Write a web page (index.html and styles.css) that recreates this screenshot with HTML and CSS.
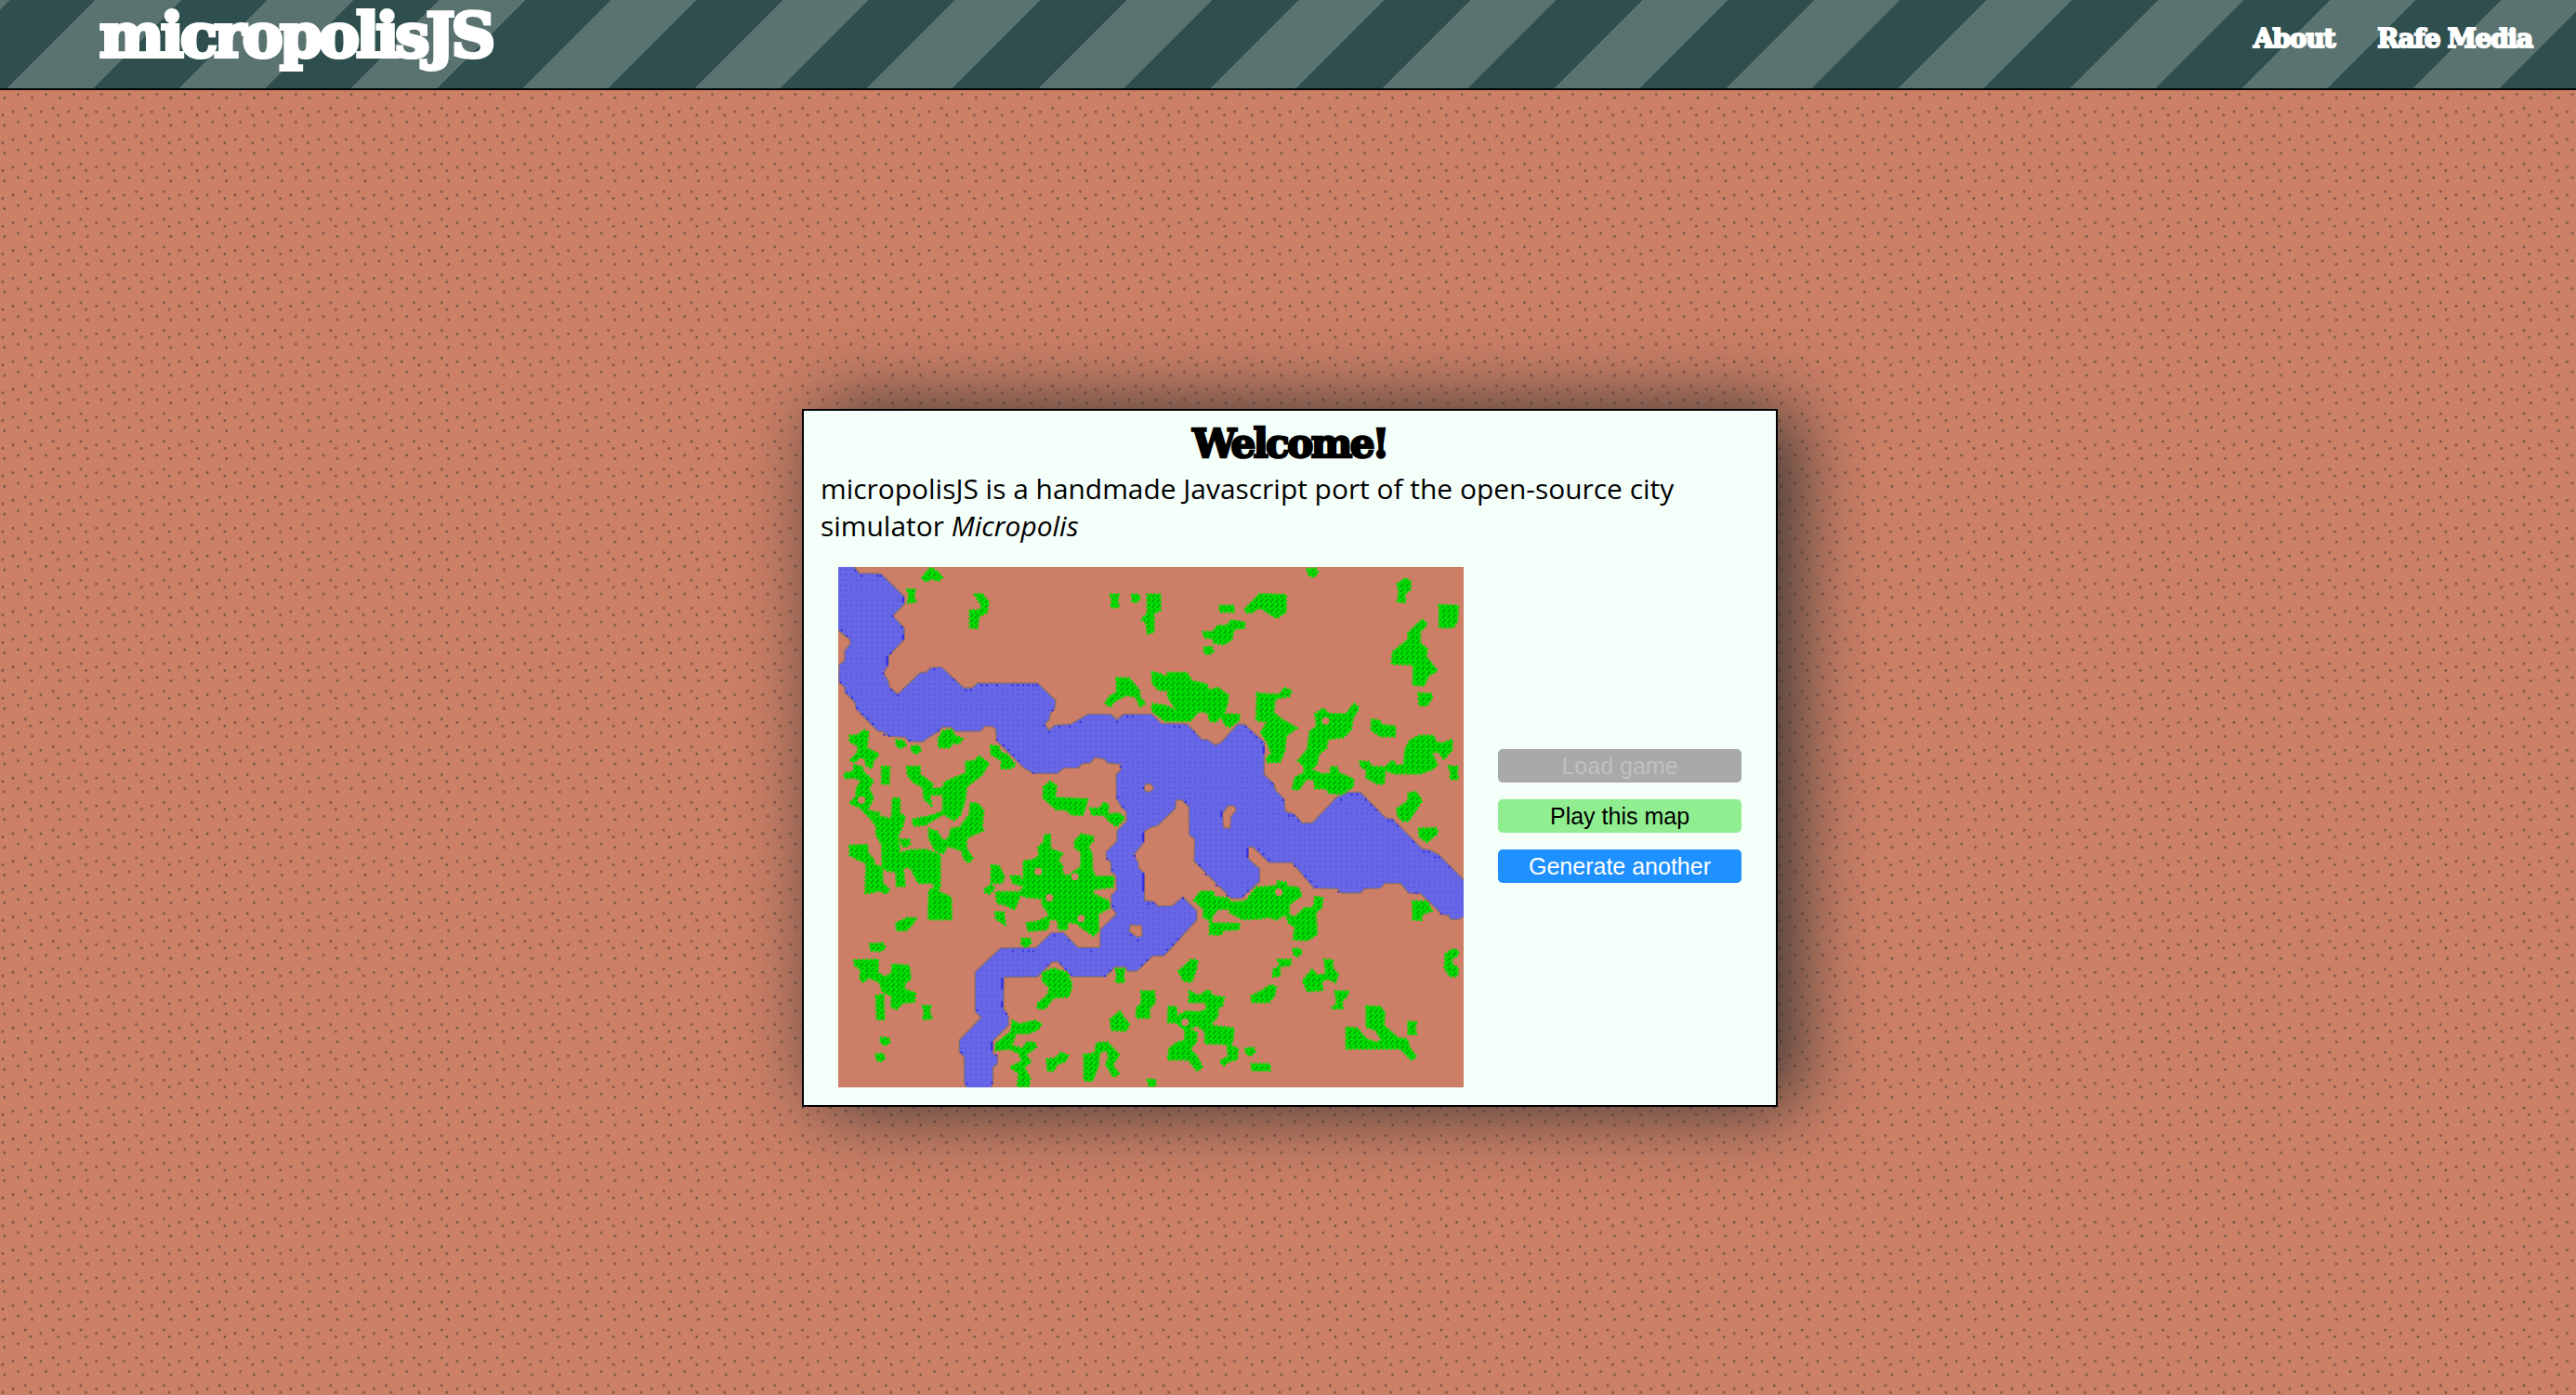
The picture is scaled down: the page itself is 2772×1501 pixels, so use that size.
FILE: index.html
```html
<!DOCTYPE html>
<html lang="en">
<head>
<meta charset="utf-8">
<title>micropolisJS</title>
<link rel="stylesheet" href="styles.css">
</head>
<body>
<header class="banner">
  <h1 class="logo">micropolisJS</h1>
  <nav class="links"><a class="about">About</a><a class="media">Rafe Media</a></nav>
</header>
<main class="stage">
  <section class="dialog">
    <h2 class="title">Welcome!</h2>
    <p class="intro">micropolisJS is a handmade Javascript port of the open-source city simulator <em>Micropolis</em></p>
    <div class="chooser">
      <svg class="map" viewBox="7 15 2016 1680" preserveAspectRatio="none">
        <defs>
          <pattern id="wood" x="7" y="15" width="16.8" height="16.8" patternUnits="userSpaceOnUse">
            <rect width="16.8" height="16.8" fill="#00e400"/>
            <path d="M4 12.5L8 9M10 5L13 2.500" stroke="#007d08" stroke-width="4.500" stroke-linecap="round" opacity=".8"/>
          </pattern>
          <pattern id="sea" x="7" y="15" width="16.8" height="16.8" patternUnits="userSpaceOnUse">
            <rect width="16.8" height="16.8" fill="#6666e6"/>
            <circle cx="8.400" cy="8.400" r="3" fill="#5555dd"/>
          </pattern>
        </defs>
        <rect x="7" y="15" width="2016" height="1680" fill="#cc7f66"/>
        <path class="water" d="M-10,5 58,5 58,15 75,35 145,37 220,110 220,135 184,173 220,212 220,250 170,302 168,335 152,358 168,380 172,402 199,425 270,357 292,354 304,340 340,338 412,405 440,405 456,390 650,390 708,446 706,470 690,490 688,508 674,522 686,542 704,526 758,522 812,490 885,490 906,508 926,490 1018,490 1048,520 1132,522 1180,572 1196,572 1224,590 1242,580 1295,522 1318,524 1380,580 1380,685 1412,715 1416,735 1446,765 1448,803 1476,812 1504,842 1536,840 1612,760 1650,742 1690,742 1772,825 1794,828 1820,855 1890,925 1912,928 1944,944 2033,1035 2033,1140 2005,1153 1980,1152 1975,1140 1955,1138 1885,1070 1845,1068 1820,1037 1770,1036 1755,1052 1705,1054 1690,1068 1628,1068 1618,1054 1540,1052 1470,970 1395,970 1345,920 1328,920 1328,955 1366,990 1366,1030 1306,1085 1274,1085 1154,965 1156,895 1138,880 1137,790 1115,768 1096,768 1094,795 1037,850 1018,855 992,870 992,905 960,945 975,970 975,985 993,1005 995,1092 1020,1094 1040,1110 1085,1108 1118,1080 1163,1125 1163,1155 1058,1270 1020,1272 970,1320 940,1320 932,1306 900,1306 868,1338 760,1338 715,1290 697,1290 650,1338 542,1340 540,1440 556,1465 556,1495 506,1545 506,1585 522,1600 520,1620 506,1630 506,1680 497,1705 425,1705 413,1682 413,1598 397,1582 397,1543 467,1470 448,1450 448,1322 530,1245 645,1243 695,1195 733,1195 780,1243 850,1243 852,1185 904,1135 887,1115 887,1075 904,1058 902,1010 887,1000 885,970 870,950 870,935 905,900 905,868 937,835 935,805 920,790 903,762 903,685 918,670 918,652 875,648 865,636 835,630 820,648 795,650 780,664 735,664 715,682 638,682 605,664 517,575 515,540 505,530 480,530 465,546 385,546 370,532 345,532 325,550 300,565 280,580 235,578 222,565 170,562 150,547 135,546 65,475 60,452 28,420 28,405 8,385 10,330 27,318 28,285 46,262 44,250 -10,205Z M992,728 1000,716 1014,716 1024,728 1014,740 998,740Z M1265,785 1285,788 1290,800 1273,820 1270,858 1250,858 1246,812Z M950,1170 985,1173 987,1205 970,1210 945,1190Z"/>
        <path class="shore" d="M62,27h0M82,44h0M132,44h0M143,44h0M216,115v12M182,175h0M212,210h0M216,235v12M177,293h0M165,305v26M152,359h0M178,412h0M199,430h0M317,347h0M380,380h0M418,413h0M435,413h0M469,397h0M486,397h0M519,397h0M569,397h0M586,397h0M603,397h0M620,397h0M636,397h0M648,397h0M698,478h0M670,526h0M686,548h0M720,531h0M754,531h0M788,515h0M906,515h0M939,498h0M956,498h0M18,220h0M35,237h0M15,388h0M35,421h0M52,437h0M68,471h0M85,490h0M102,506h0M118,522h0M155,557h0M170,560h0M238,575h0M330,543h0M519,573h0M540,591h0M556,606h0M573,622h0M590,640h0M636,680h0M917,660h0M908,758h0M925,790h0M990,728h0M1090,531h0M1107,531h0M1154,548h0M1320,531h0M1338,548h0M1355,565h0M1371,582h0M1378,595v20M1405,715h0M1440,768h0M1460,818h0M1473,818h0M1490,834h0M1628,767h0M1662,750h0M1679,750h0M1708,767h0M1725,784h0M1741,800h0M1780,834h0M1793,834h0M1810,851h0M1127,774h0M1242,805v15M1860,902h0M1895,935h0M1910,935h0M1930,952h0M1943,952h0M1977,985h0M1950,1134h0M1870,1068h0M1620,1064h0M1548,1048h0M1530,1030h0M1513,1013h0M1479,980h0M1396,960h0M1378,942h0M1363,926h0M1326,925v26M1172,977h0M1192,1008h0M1226,1043h0M1262,1076h0M1312,1076h0M1328,1060h0M990,875v25M963,948h0M990,1005v55M1007,1103h0M1024,1100h0M1118,1085h0M1102,1217h0M1085,1234h0M1068,1250h0M1002,1284h0M985,1300h0M866,1335h0M884,1318h0M758,1330h0M740,1314h0M725,1295h0M682,1300h0M704,1205h0M750,1221h0M822,1255h0M570,1255h0M603,1255h0M620,1255h0M637,1255h0M893,1110h0M890,992h0M873,958h0M950,1204h0M973,1221h0M535,1345v30M535,1420v15M549,1457h0M502,1550v25M517,1592h0M502,1680h0M455,1446h0M405,1582h0M422,1682h0"/>
        <g class="trees">
          <path d="M278,50 285,40 305,18 325,30 342,48 330,60 310,52 290,62ZM230,88 255,88 250,108 256,128 232,130 236,108ZM448,104 470,102 492,128 485,162 460,175 455,212 432,212 432,155 460,155 472,145ZM885,104 912,104 906,122 912,145 886,145 890,122ZM955,104 975,104 980,118 965,130 955,125ZM1004,104 1045,104 1045,155 1024,165 1024,225 1004,230 1000,195 985,185 1004,165ZM905,373 945,375 978,415 978,435 996,455 980,466 968,435 935,428 895,450 885,466 868,455 880,435 905,420Z"/>
          <path d="M45,560 70,558 90,542 104,548 98,600 138,620 120,640 115,665 98,655 92,632 76,634 62,645 46,640 65,620 75,600 60,585 45,580ZM60,655 80,655 90,680 120,705 105,730 120,760 100,800 140,810 128,848 110,825 75,790 45,778 65,755 65,735 80,705 60,695 28,697 28,680 55,678ZM148,660 172,660 170,715 148,715ZM195,575 215,575 225,590 208,600 195,592ZM245,595 265,592 274,605 260,618 245,610ZM345,545 372,540 382,560 408,570 395,585 372,582 368,598 332,598 330,570ZM500,593 522,593 530,615 550,620 578,655 560,665 532,665 535,640 500,620Z"/>
          <path d="M230,660 270,660 270,685 310,715 310,730 345,730 350,710 385,695 420,680 418,645 450,640 460,625 492,650 470,685 420,725 415,770 400,815 380,832 345,812 300,840 285,848 250,850 248,830 300,820 345,805 345,750 300,750 308,785 285,765 280,725 250,710 230,685ZM670,725 690,708 710,722 705,760 810,765 805,785 795,815 760,815 740,798 710,798 668,760ZM820,795 850,795 865,775 878,785 875,815 910,810 930,825 905,852 880,835 865,815 825,815Z"/>
          <path d="M45,915 100,912 103,940 122,960 120,975 148,985 150,1035 172,1058 160,1070 140,1058 120,1065 95,1068 98,970 75,962 45,945ZM112,815 150,822 180,830 183,762 205,762 205,812 222,820 215,850 200,880 205,940 235,930 290,928 335,945 335,1050 325,1060 370,1082 372,1152 298,1152 300,1060 318,1050 315,1035 265,1035 240,985 215,985 222,1045 195,1045 195,1000 165,995 150,985 148,910 130,880 130,845ZM210,895 235,895 238,910 220,920 212,910ZM435,778 455,778 475,800 470,855 475,865 445,878 420,890 420,925 440,955 428,970 412,955 405,930 360,915 345,940 320,930 300,890 300,860 325,870 345,900 365,890 370,862 400,855 430,815Z"/>
          <path d="M195,1165 230,1148 258,1150 240,1175 225,1188 195,1188ZM110,1232 150,1230 158,1245 145,1255 112,1253ZM60,1285 135,1283 135,1325 160,1340 180,1325 182,1298 235,1302 240,1345 220,1360 222,1380 255,1390 252,1418 215,1422 195,1442 178,1435 180,1400 150,1385 140,1355 105,1340 88,1355 78,1345 80,1315 60,1300ZM130,1400 152,1395 155,1475 132,1475ZM280,1432 305,1432 300,1450 308,1472 280,1475 285,1452ZM145,1535 168,1535 174,1548 158,1560 145,1550ZM130,1588 150,1586 158,1600 142,1612 130,1605Z"/>
          <path d="M502,978 525,980 542,1015 535,1035 500,1035ZM565,1013 590,1013 605,1030 605,965 640,960 655,945 652,920 670,905 672,880 690,880 690,925 730,940 715,960 730,980 728,1005 750,1015 765,1000 790,985 790,935 770,920 770,900 790,878 828,885 828,900 812,915 825,945 825,990 835,1015 895,1015 892,1048 830,1055 828,1070 880,1095 880,1115 845,1135 845,1190 830,1205 800,1185 775,1165 745,1160 745,1185 718,1185 715,1155 690,1150 680,1185 620,1190 615,1165 650,1160 690,1140 665,1105 665,1085 610,1080 595,1070 575,1120 545,1105 520,1100 515,1065 595,1065 605,1045 570,1035ZM480,1055 500,1040 510,1052 495,1070 482,1065ZM515,1130 540,1130 545,1170 515,1150ZM600,1215 625,1215 628,1230 612,1242 598,1232Z"/>
          <path d="M668,1325 700,1312 745,1325 760,1365 750,1402 700,1405 675,1440 650,1440 650,1425 680,1400 690,1375 665,1350ZM902,1313 930,1313 925,1335 930,1355 902,1355 906,1335ZM570,1480 590,1492 640,1480 662,1490 650,1508 620,1520 580,1520 565,1560 600,1570 615,1550 640,1550 645,1565 610,1590 628,1612 605,1630 625,1665 620,1692 585,1692 590,1650 562,1630 600,1610 590,1585 560,1570 515,1575 515,1555 565,1515ZM680,1605 710,1600 725,1582 748,1592 740,1610 712,1620 700,1642 682,1640ZM800,1590 835,1585 840,1552 875,1550 912,1590 890,1625 912,1650 895,1662 870,1620 880,1595 870,1572 848,1585 845,1625 825,1675 800,1672ZM885,1475 915,1450 930,1475 945,1490 935,1512 888,1510ZM985,1385 1025,1385 1028,1420 1010,1440 1010,1470 968,1470 970,1438 985,1425ZM1005,1670 1028,1670 1030,1688 1010,1692Z"/>
          <path transform="translate(1020 0)" d="M500,22 525,20 533,33 520,48 505,42ZM218,140 262,140 262,160 218,160ZM300,150 345,103 430,105 430,160 400,180 345,145 320,162 302,162ZM165,225 195,225 210,205 240,205 255,187 298,195 295,212 262,215 255,250 230,265 198,260 195,245 168,243ZM168,275 190,272 196,288 180,298 167,292ZM0,355 25,360 45,372 50,357 110,357 128,385 150,388 175,395 180,415 210,405 245,430 240,460 230,490 280,492 278,510 250,532 235,525 220,495 205,515 185,512 180,485 150,480 120,512 40,512 0,480 0,458 40,462 80,480 50,435 50,415 20,412 0,390ZM338,423 410,428 425,405 448,415 440,432 395,440 390,485 420,510 465,535 430,560 425,610 410,645 370,645 370,628 385,620 370,580 350,550 370,515 335,510Z"/>
          <path transform="translate(1020 0)" d="M525,490 550,472 570,490 625,490 650,457 665,470 645,505 640,540 615,565 565,570 560,600 535,620 530,650 512,670 550,685 575,680 575,660 595,662 600,680 648,700 645,725 610,748 570,745 560,730 525,730 520,700 495,700 470,735 452,730 460,695 490,680 490,660 470,640 500,605 508,545 530,530ZM708,508 730,510 740,525 782,530 782,562 735,562 705,540ZM670,643 700,645 705,660 750,662 775,640 785,655 810,655 815,605 830,575 860,560 905,560 915,582 935,585 965,572 965,605 940,635 920,610 900,615 918,655 900,668 865,682 780,682 750,670 745,715 725,715 690,695 690,670 672,660ZM955,658 985,660 980,675 985,700 960,700 962,678ZM790,70 815,52 832,62 830,90 812,100 815,128 790,128 795,100ZM925,138 985,140 982,190 970,210 925,210ZM825,228 870,185 885,200 862,225 862,260 885,280 882,305 918,350 890,365 875,398 840,395 842,330 772,328 775,290 805,265 825,250ZM858,423 900,425 900,440 885,462 860,462ZM790,795 825,770 825,745 850,742 868,770 825,835 805,835 790,815Z"/>
          <path transform="translate(1020 855)" d="M860,5 915,3 918,20 885,48 860,30ZM135,235 155,208 195,208 200,225 245,230 250,243 300,240 335,195 400,190 405,175 430,180 435,192 470,195 480,220 440,250 440,285 460,290 490,262 520,260 525,225 548,228 545,260 525,275 530,345 500,365 455,362 460,320 440,310 430,280 400,298 375,290 345,295 290,297 250,275 245,262 210,265 190,290 190,310 280,312 278,330 230,332 220,347 185,345 185,300 165,290 165,265ZM840,240 885,240 900,270 870,280 865,300 840,298ZM455,393 475,393 482,405 465,418 455,410ZM405,428 445,428 445,445 410,450 410,480 388,482 390,460 412,450ZM555,428 580,430 580,455 598,475 590,500 565,490 545,495 548,525 500,530 485,495 515,460 530,478 560,475Z"/>
          <path transform="translate(1020 855)" d="M85,465 125,428 145,430 140,460 125,500 100,495ZM120,530 150,545 180,525 195,545 230,550 225,575 210,585 210,610 185,640 262,650 258,690 250,705 275,715 272,750 245,755 230,770 218,755 245,740 240,700 170,698 170,660 145,640 120,650 143,665 140,695 120,715 143,740 160,775 145,787 115,750 50,750 55,715 80,695 105,690 105,655 75,630 50,630 52,580 75,580 80,610 110,595 150,598 175,590 172,565 118,565ZM320,545 350,530 380,510 398,515 392,545 375,565 320,565ZM590,530 632,530 625,548 610,560 612,585 578,585 595,570ZM690,578 735,580 748,600 745,640 790,680 820,685 830,715 850,740 835,752 800,715 625,715 625,645 660,650 690,685 720,695 740,690 720,655 690,645ZM825,628 850,630 845,650 850,668 825,668ZM300,715 325,712 330,725 315,738 302,730ZM320,765 378,765 378,785 320,785ZM945,410 970,393 985,400 985,412 965,425 962,440 985,455 982,480 960,482 942,455Z"/>
        </g>
        <path class="clearing" d="M652,998h0M770,1015h0M688,1083h0M790,1150h0M80,645h0M82,767h0M1578,512h0M1427,1065h0M1125,1485h0"/>
      </svg>
      <div class="actions">
        <button class="btn load" disabled>Load game</button>
        <button class="btn play">Play this map</button>
        <button class="btn again">Generate another</button>
      </div>
    </div>
  </section>
</main>
</body>
</html>
```
FILE: styles.css
```css
* { box-sizing: border-box; margin: 0; padding: 0; }

body {
  height: 1501px;
  overflow: hidden;
  background-color: #cc8066;
  background-image:
    radial-gradient(circle at 4.700px 15.500px, #7a5549 0, #7a5549 .9px, transparent 1.900px),
    radial-gradient(circle at 19.600px 11.900px, #7a5549 0, #7a5549 .9px, transparent 1.900px),
    radial-gradient(circle at 27.200px 26.900px, #7a5549 0, #7a5549 .9px, transparent 1.900px),
    radial-gradient(circle at 14px 3.300px, #7a5549 0, #7a5549 .9px, transparent 1.900px),
    radial-gradient(circle at 2.900px 4.400px, #7a5549 0, #7a5549 .9px, transparent 1.900px);
  background-size: 29.89px 29.89px;
  background-position: 0 0, 0 0, 0 0, 0 -2.600px, 0 0;
}

.banner {
  display: flex;
  justify-content: space-between;
  height: 97px;
  padding: 0 47px 0 107px;
  border-bottom: 2px solid #000;
  background: repeating-linear-gradient(135deg, #5a7371 0 7.200px, #2f4f4f 7.200px 72.600px, #5a7371 72.600px 130.780px);
  color: #fff;
  font-family: "DejaVu Serif", serif;
  font-weight: bold;
}

.logo {
  font-size: 66px;
  line-height: 77px;
  letter-spacing: -4px;
  -webkit-text-stroke: 4px #fff;
}

.links {
  display: flex;
  gap: 46px;
  font-size: 28px;
  line-height: 84px;
  letter-spacing: -1.200px;
  -webkit-text-stroke: 2px #fff;
}

.stage { display: flex; justify-content: center; padding: 343px 0 0 4px; }

.dialog {
  width: 1050px;
  height: 751px;
  padding: 12px 18px 14px;
  border: 2px solid #000;
  background: #f5fffa;
  box-shadow: 20px 0 80px 0 #333;
}

.title {
  font: bold 42px/48px "DejaVu Serif", serif;
  letter-spacing: -2.500px;
  text-align: center;
  -webkit-text-stroke: 2.500px #000;
}

.intro { font: 29.92px/40px "Open Sans", "Noto Sans", sans-serif; margin-top: 4px; }

.chooser { display: flex; gap: 37px; align-items: center; margin: 24px 0 0 19px; }

.map { width: 673px; height: 560px; flex: none; }
.water { fill: url(#sea); fill-rule: evenodd; stroke: #8a6f70; stroke-width: 4; stroke-linejoin: round; }
.shore { fill: none; stroke: #3a2fe0; stroke-width: 7; stroke-linecap: round; }
.trees { fill: url(#wood); stroke: #14d408; stroke-width: 10; stroke-linecap: round; stroke-dasharray: 0 13; }
.clearing { stroke: #cc7f66; stroke-width: 24; stroke-linecap: round; }

.actions { display: flex; flex-direction: column; gap: 18px; width: 262px; margin-top: -24px; }
.btn { height: 36px; border: 0; border-radius: 5px; font: 25px/36px "Liberation Sans", Arial, sans-serif; }
.load { background: #a9a9a9; color: #c0c0c0; }
.play { background: #90ee90; color: #000; }
.again { background: #1e90ff; color: #fff; }
```
